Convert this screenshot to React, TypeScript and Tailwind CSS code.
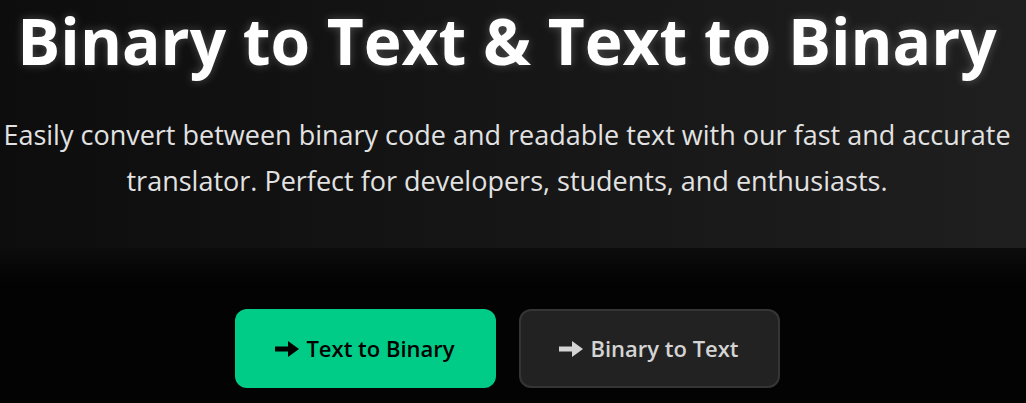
import React from "react";

const Arrow = ({ className }: { className?: string }) => (
  <svg viewBox="0 0 24 16" className={className} fill="currentColor" aria-hidden>
    <path d="M0 5.5h13V0l11 8-11 8v-5.5H0z" />
  </svg>
);

const App = () => {
  return (
    <div className="min-h-screen bg-[#030303] font-['Open_Sans','Noto_Sans',sans-serif]">
      <header className="bg-gradient-to-r from-[#0d0d0d] to-[#1f1f1f] pt-[1px] pb-[44px] pr-[12px] text-center">
        <h1 className="text-[64px] leading-[80px] font-bold text-white [text-shadow:0_0_10px_rgba(255,255,255,0.25)] whitespace-nowrap">
          Binary to Text &amp; Text to Binary
        </h1>
        <p className="mt-[31px] text-[27px] leading-[46px] text-[#e2e2e2] whitespace-nowrap">
          Easily convert between binary code and readable text with our fast and accurate
          <br />
          translator. Perfect for developers, students, and enthusiasts.
        </p>
      </header>

      <main className="bg-[linear-gradient(to_bottom,#0c0c0c,#030303_36px)] pt-[61px] pr-[12px]">
        <div className="flex justify-center gap-[23px]">
          <button className="flex items-center justify-center gap-[7px] w-[261px] h-[79px] rounded-[12px] bg-[#00cc88] text-black text-[22px] font-semibold">
            <Arrow className="w-[24px] h-[16px]" />
            Text to Binary
          </button>
          <button className="flex items-center justify-center gap-[7px] w-[261px] h-[79px] rounded-[12px] bg-[#222222] border-2 border-[#353535] text-[#d4d4d4] text-[22px] font-semibold">
            <Arrow className="w-[24px] h-[16px]" />
            Binary to Text
          </button>
        </div>
      </main>
    </div>
  );
};

export default App;
